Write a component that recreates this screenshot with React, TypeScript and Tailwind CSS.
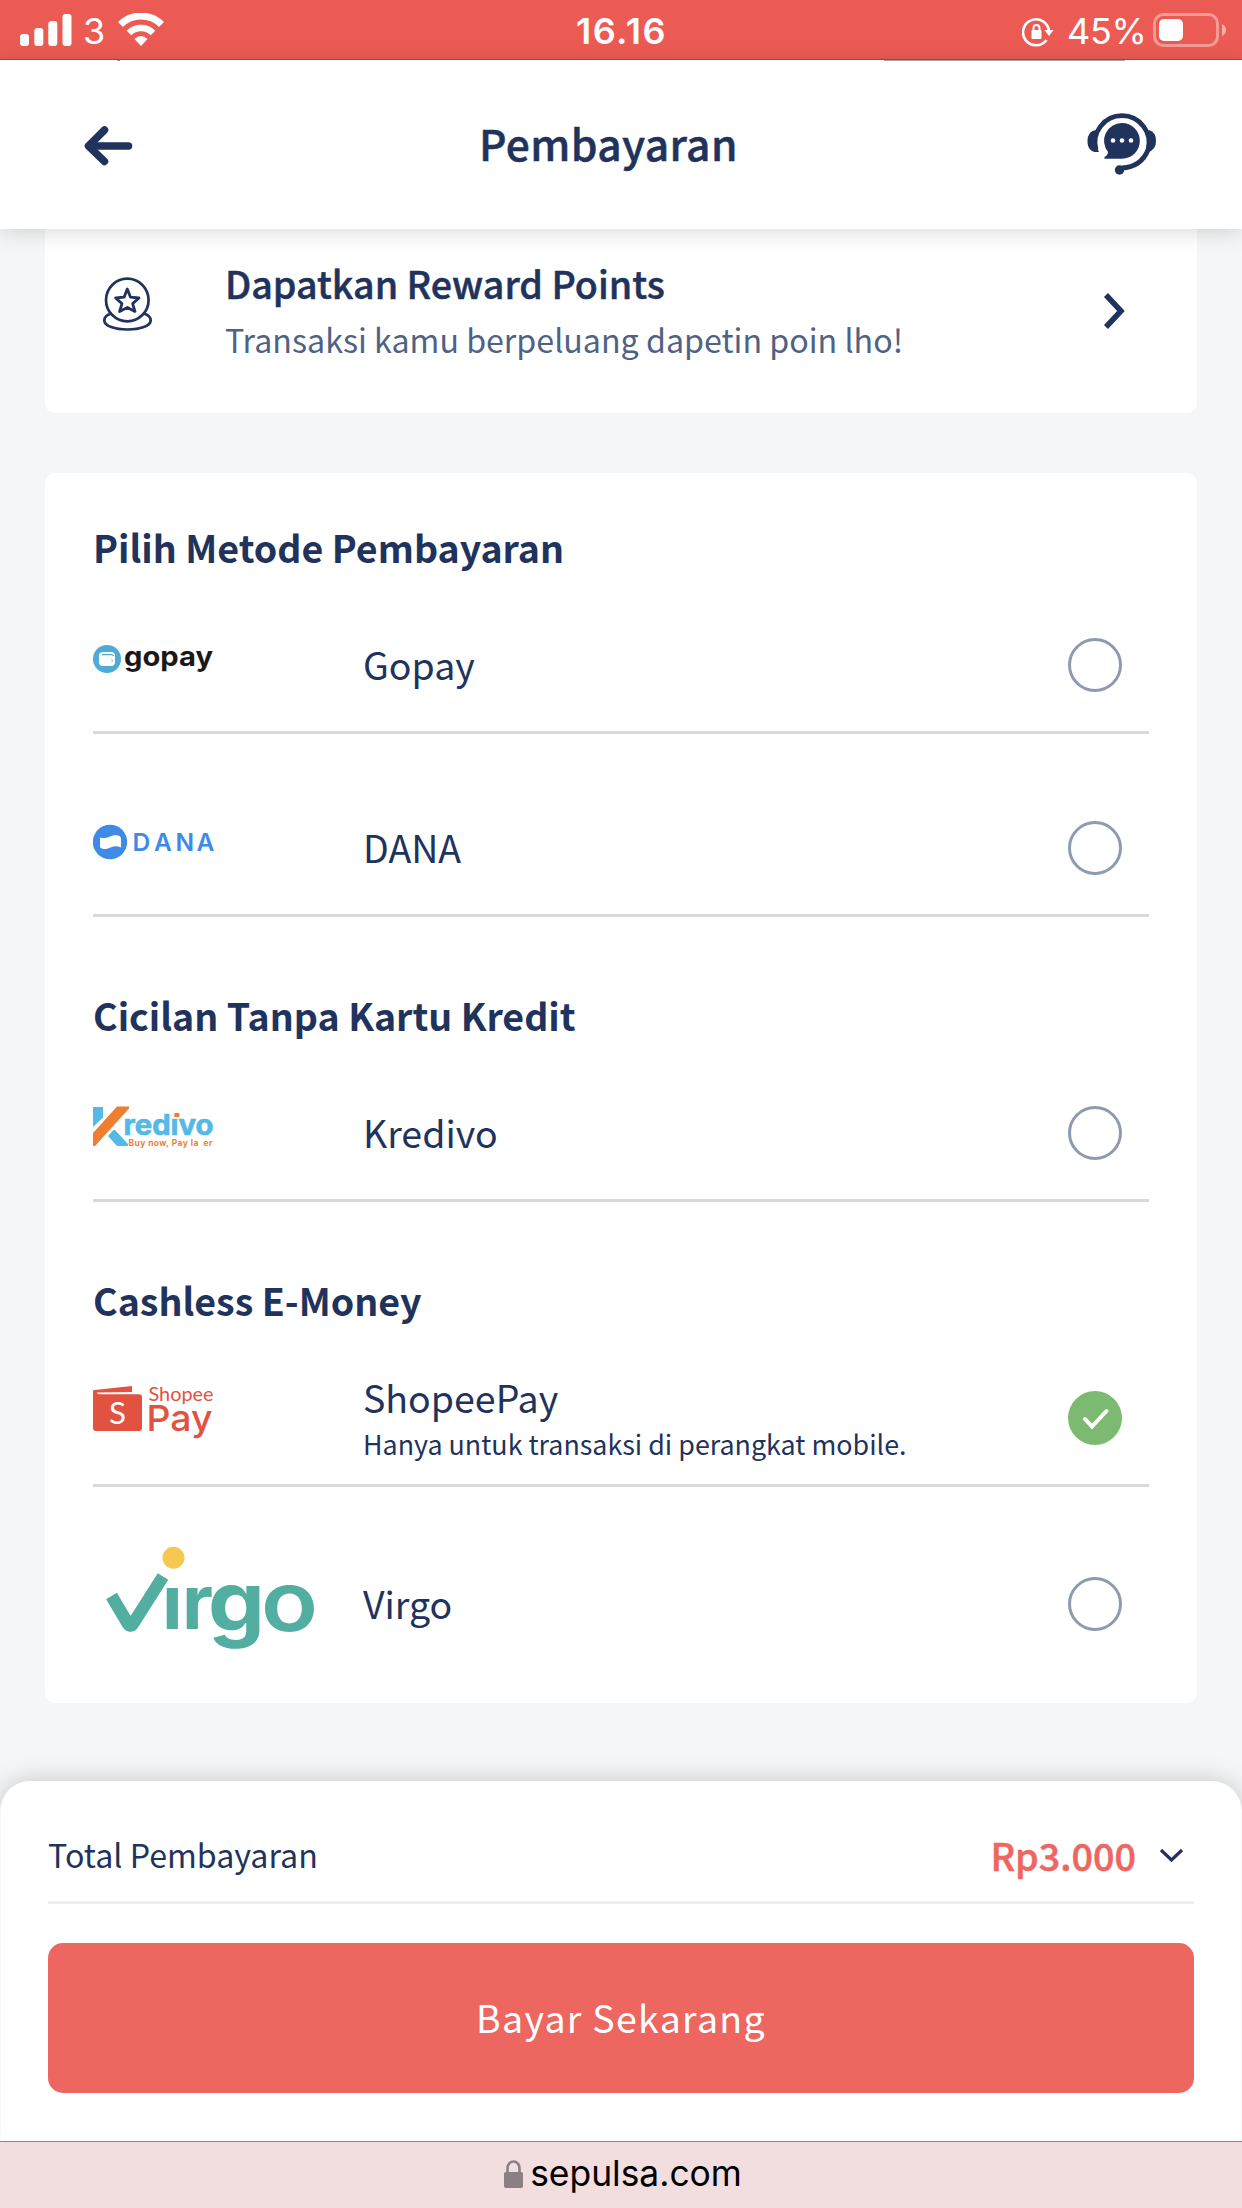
import React from "react";

const ui = "font-['Noto_Sans_CJK_JP','Noto_Sans',sans-serif]";
const sys = "font-['Inter','Liberation_Sans',sans-serif]";

function StatusBar() {
  return (
    <div className={`flex h-[60px] shrink-0 items-start border-b border-[#a04e50] bg-[#ec5b53] text-white ${sys}`}>
      <div className="flex w-[414px] items-start pl-5">
        <svg className="mt-[14px] h-8 w-[52px]" viewBox="0 0 52 32" fill="#fff">
          <rect x="0" y="20" width="9" height="12" rx="3" />
          <rect x="14.3" y="14" width="9" height="18" rx="3" />
          <rect x="28.3" y="7" width="9" height="25" rx="3" />
          <rect x="42.5" y="0" width="9" height="32" rx="3" />
        </svg>
        <span className="ml-[11px] mt-[7px] w-[22px] text-[36px] leading-[48px]">3</span>
        <svg className="ml-[13px] mt-[13px] h-[33px] w-[46px]" viewBox="0 0 46 33" fill="none" stroke="#fff">
          <path d="M2.5 11.5 A29 29 0 0 1 43.5 11.5" strokeWidth="7" />
          <path d="M11 20 A17 17 0 0 1 35 20" strokeWidth="6.5" />
          <path d="M23 33 L16.5 26 Q23 20 29.500 26Z" fill="#fff" stroke="none" />
        </svg>
      </div>
      <div className="mt-[7px] w-[414px] pl-px text-center text-[36px] font-semibold leading-[48px] tracking-[1.5px]">16.16</div>
      <div className="flex w-[414px] items-start justify-end pr-[15px]">
        <svg className="mt-[16px] h-[31px] w-8" viewBox="0 0 32 31" fill="none">
          <path d="M26.5 15 A13 13 0 1 0 24 23.500" stroke="#fff" strokeWidth="2.600" transform="translate(0.500 0.500)" />
          <path d="M22.500 14 H31.500 L27 20Z" fill="#fff" />
          <rect x="9.500" y="14" width="10" height="9" rx="1" fill="#fff" />
          <path d="M11.500 14 V12 A3 3 0 0 1 17.500 12 V14" stroke="#fff" strokeWidth="2" />
        </svg>
        <span className="ml-[13px] mt-[7px] w-[78px] whitespace-nowrap text-[36px] leading-[48px] tracking-[-0.3px]">45%</span>
        <svg className="ml-[8px] mt-[13px] h-[34px] w-[74px]" viewBox="0 0 74 34">
          <rect x="1.500" y="1.500" width="63" height="31" rx="9" fill="none" stroke="#fff" strokeOpacity=".4" strokeWidth="3" />
          <rect x="6" y="6" width="24" height="22" rx="5" fill="#fff" />
          <path d="M69 11 Q73 13 73 17 T69 23Z" fill="#fff" fillOpacity=".5" />
        </svg>
      </div>
    </div>
  );
}

function Header() {
  return (
    <header className="z-10 h-[169px] shrink-0 bg-white shadow-[0_2px_22px_rgba(0,0,0,0.16)]">
      <div className="flex h-px">
        <div className="ml-[117px] w-[3px] bg-[#8d94a0]" />
        <div className="ml-[764px] w-[241px] bg-[#a3a5a9]" />
      </div>
      <div className="flex items-start">
        <svg className="ml-[83px] mt-[64px] h-[42px] w-[50px]" viewBox="83 125 50 42" fill="none" stroke="#1f335c" strokeWidth="7.500" strokeLinecap="round" strokeLinejoin="round">
          <path d="M104.500 130 L88.500 146 L104.500 161.500" />
          <path d="M89 146 H128.500" />
        </svg>
        <h1 className="ml-[346px] mt-[50px] w-[264px] whitespace-nowrap text-[42.500px] font-medium leading-[64px] tracking-[0.4px] text-[#1f335c] [-webkit-text-stroke:0.5px_#1f335c]">Pembayaran</h1>
        <svg className="ml-[344px] mt-[50px] h-[66px] w-[70px]" viewBox="1087 112 70 66">
          <path d="M1096 151 A27 27 0 1 1 1148 151 Q1141 168 1122 169" fill="none" stroke="#1f335c" strokeWidth="4.800" />
          <path d="M1099 153 Q1087.500 154 1087.500 142 Q1087.500 132 1096 131 Q1093 142 1099 153Z" fill="#1f335c" />
          <path d="M1149 131 Q1156 133 1156 142 Q1156 151 1148 153Z" fill="#1f335c" />
          <circle cx="1119.500" cy="171" r="4.700" fill="#1f335c" />
          <path d="M1122 124 A17.800 17.800 0 0 1 1122 159.700 H1104.500 V158 Q1108 156 1108 153 A17.800 17.800 0 0 1 1122 124Z" fill="#1f335c" />
          <circle cx="1113" cy="141.500" r="2.300" fill="#fff" />
          <circle cx="1122" cy="141.500" r="2.300" fill="#fff" />
          <circle cx="1131" cy="141.500" r="2.300" fill="#fff" />
        </svg>
      </div>
    </header>
  );
}

function RewardCard() {
  return (
    <section className="mx-[45px] flex h-[184px] shrink-0 items-start rounded-b-[10px] bg-white">
      <svg className="ml-[57px] mt-[48px] h-[56px] w-[52px]" viewBox="102 277 52 56" fill="none" stroke="#1f335c" strokeWidth="2.700" strokeLinejoin="round">
        <circle cx="127.300" cy="300" r="21.300" />
        <path d="M127.300 289 L130.500 297.200 L139 298 L132.600 303.600 L135 311.500 L127.300 307.500 L119.600 311.500 L122 303.600 L115.600 298 L124.100 297.200Z" strokeWidth="2.800" />
        <path d="M111.500 313.500 C106 315 104.300 317.500 104.300 320.500 C104.300 326 115 329.500 127.500 329.500 C140 329.500 150.700 326 150.700 320.500 C150.700 317.500 149 315 143.500 313.500" />
      </svg>
      <div className="ml-[71px] mt-[30px] w-[760px] whitespace-nowrap">
        <div className="text-[37.600px] font-medium leading-[48px] text-[#1f335c] [-webkit-text-stroke:0.5px_#1f335c]">Dapatkan Reward Points</div>
        <div className="mt-[10px] text-[32.200px] leading-[44px] text-[#4f6285]">Transaksi kamu berpeluang dapetin poin lho!</div>
      </div>
      <svg className="ml-[115px] mt-[62px] h-10 w-7" viewBox="0 0 28 40" fill="none" stroke="#1f335c" strokeWidth="5.500">
        <path d="M6 4 L21 20 L6 36" />
      </svg>
    </section>
  );
}

function GopayLogo() {
  return (
    <svg className="mt-[3px] h-10 w-[130px] overflow-visible" viewBox="93 641 130 40">
      <circle cx="107" cy="659" r="14" fill="#4dabd5" />
      <rect x="99" y="652" width="16" height="14" rx="4" fill="#fff" />
      <path d="M102 654.700 H111 Q113 654.700 113.500 656" fill="none" stroke="#4dabd5" strokeWidth="1.200" />
      <path d="M111.500 659.500 A1.300 1.300 0 0 1 111.500 662" fill="none" stroke="#4dabd5" strokeWidth=".8" />
      <text x="124" y="666" textLength="89" lengthAdjust="spacingAndGlyphs" fill="#1c1819" className="font-['Inter'] text-[27px] font-bold">gopay</text>
    </svg>
  );
}

function DanaLogo() {
  return (
    <svg className="mt-[3px] h-10 w-[130px]" viewBox="93 824 130 40">
      <circle cx="110" cy="842" r="17.200" fill="#3e8ae6" />
      <path d="M100 837.500 Q105 839 110 836.500 T118 835.500 Q121 836 121 839 V847.500 Q116 845 110.500 847.500 T102 848.500 Q100 848.500 100 846Z" fill="#fff" />
      <text x="132.500 154 175.500 196.500" y="851" fill="#3e8ae6" className="font-['Inter'] text-[24.500px] font-semibold">DANA</text>
    </svg>
  );
}

function KredivoLogo() {
  return (
    <svg className="h-11 w-[130px]" viewBox="93 1106 130 44">
      <path d="M93 1107 H103 V1117.500 L93 1127Z" fill="#54b9e6" />
      <path d="M117 1106.500 H129 V1108.500 L95 1146 H93 V1133Z" fill="#f07e30" />
      <path d="M108 1136 L113.500 1130 H115 L128 1144 V1146 H117Z" fill="#54b9e6" />
      <text x="123.500" y="1134.500" textLength="90" lengthAdjust="spacingAndGlyphs" fill="#54b9e6" stroke="#54b9e6" strokeWidth=".7" className="font-['Inter'] text-[28px] font-bold">redivo</text>
      <rect x="172" y="1110" width="9" height="8" fill="#fff" />
      <rect x="174.300" y="1113" width="5" height="4" fill="#f07e30" />
      <text x="128.500" y="1146" textLength="84" fill="#f07e30" xmlSpace="preserve" className="whitespace-pre font-['Inter'] text-[8.500px] font-bold">Buy now, Pay la  er</text>
    </svg>
  );
}

function ShopeeLogo() {
  return (
    <svg className="mt-[-9px] h-[60px] w-[130px] overflow-visible" viewBox="93 1382 130 60">
      <path d="M93 1391 Q93 1390 95 1390 L132 1386 V1392 L97 1392.400 Q97 1394.200 99 1394.200 H139 Q142 1394.200 142 1397 V1428 Q142 1431 139 1431 H96 Q93 1431 93 1428Z" fill="#e25241" />
      <text x="109" y="1423.500" textLength="17" lengthAdjust="spacingAndGlyphs" fill="#fff" className="font-['Lato'] text-[31px]">S</text>
      <text x="148.500" y="1401" textLength="65" lengthAdjust="spacingAndGlyphs" fill="#e25241" className="font-['Lato'] text-[20px]">Shopee</text>
      <text x="146.500" y="1430.800" textLength="66" lengthAdjust="spacingAndGlyphs" fill="#e25241" className="font-['Inter'] text-[36px] font-medium">Pay</text>
    </svg>
  );
}

function VirgoLogo() {
  return (
    <svg className="mt-[-37px] h-[120px] w-[230px] overflow-visible" viewBox="93 1540 230 120">
      <circle cx="173.500" cy="1557.700" r="11" fill="#f7c851" />
      <path d="M111.500 1596 L127.500 1623 Q130.500 1628 133.500 1623 L163 1576.500" fill="none" stroke="#53aea2" strokeWidth="12.500" />
      <g fill="#53aea2" className="font-['Inter'] text-[76px] font-bold">
        <text x="162" y="1629">ı</text>
        <text x="182" y="1629">r</text>
        <text x="208" y="1631" textLength="57" lengthAdjust="spacingAndGlyphs" className="text-[83px] font-bold">g</text>
        <text x="261" y="1631" textLength="57" lengthAdjust="spacingAndGlyphs" className="text-[83px] font-semibold">o</text>
      </g>
    </svg>
  );
}

function Radio({ checked }: { checked?: boolean }) {
  if (checked) {
    return (
      <div className="h-[54px] w-[54px] rounded-full bg-[#7cba71]">
        <svg viewBox="0 0 54 54" fill="none" stroke="#fff" strokeWidth="4" strokeLinecap="round">
          <path d="M17 28 L24 35.500 L38.500 20" />
        </svg>
      </div>
    );
  }
  return <div className="h-[54px] w-[54px] rounded-full border-[3px] border-[#8e9ab0]" />;
}

function Method({ logo, name, note, checked, className }: { logo: React.ReactNode; name: string; note?: string; checked?: boolean; className: string }) {
  return (
    <div className={`flex items-start text-[#1f335c] ${className}`}>
      <div className="w-[270px] shrink-0">{logo}</div>
      <div className={note ? "mt-[-18px] grow" : "mt-[2px] grow"}>
        <div className="text-[37.500px] leading-[48px]">{name}</div>
        {note && <div className="mt-[3px] whitespace-nowrap text-[26.850px] leading-10">{note}</div>}
      </div>
      <div className="mr-[27px] shrink-0">
        <Radio checked={checked} />
      </div>
    </div>
  );
}

function Heading({ children, className }: { children: React.ReactNode; className: string }) {
  return <h2 className={`text-[37.550px] font-bold leading-[48px] text-[#1f335c] ${className}`}>{children}</h2>;
}

const line = "border-b-[3px] border-[#d9d9d9]";

export default function App() {
  return (
    <div className={`flex h-[2208px] w-[1242px] flex-col overflow-hidden bg-[#f5f6f8] ${ui}`}>
      <StatusBar />
      <Header />
      <RewardCard />
      <section className="mx-[45px] mt-[60px] h-[1230px] shrink-0 rounded-[10px] bg-white px-12 pt-[50px]">
        <Heading className="">Pilih Metode Pembayaran</Heading>
        <Method className={`h-[163px] pt-[67px] ${line}`} logo={<GopayLogo />} name="Gopay" />
        <Method className={`h-[183px] pt-[87px] ${line}`} logo={<DanaLogo />} name="DANA" />
        <Heading className="mt-[74px]">Cicilan Tanpa Kartu Kredit</Heading>
        <Method className={`h-[163px] pt-[67px] ${line}`} logo={<KredivoLogo />} name="Kredivo" />
        <Heading className="mt-[74px]">Cashless E-Money</Heading>
        <Method className={`h-[163px] pt-[67px] ${line}`} logo={<ShopeeLogo />} name="ShopeePay" note="Hanya untuk transaksi di perangkat mobile." checked />
        <Method className="pt-[90px]" logo={<VirgoLogo />} name="Virgo" />
      </section>
      <section className="mt-[78px] h-[360px] shrink-0 rounded-t-[30px] border-x border-[#f8f8f9] bg-white px-[47px] pt-[50px] shadow-[0_0_26px_rgba(0,0,0,0.2)]">
        <div className="flex h-[73px] items-start border-b-[3px] border-[#eeeeee]">
          <div className="mt-[-1px] grow text-[32.200px] leading-[48px] text-[#1f335c]">Total Pembayaran</div>
          <div className="text-[37.700px] font-medium leading-[48px] text-[#ed6660] [-webkit-text-stroke:0.5px_#ed6660]">Rp3.000</div>
          <svg className="ml-[22px] mr-[9px] mt-[14px] h-5 w-[27px]" viewBox="0 0 27 20" fill="none" stroke="#1f335c" strokeWidth="3.200">
            <path d="M3 5 L13.500 15 L24 5" />
          </svg>
        </div>
        <button className="mt-[39px] flex h-[150px] w-full items-center justify-center rounded-[15px] bg-[#ed6660] pb-[2px] text-[37.500px] tracking-[1.300px] text-white">Bayar Sekarang</button>
      </section>
      <footer className={`flex h-[67px] shrink-0 items-start justify-center border-t border-[#8e8788] bg-[#f2dede] text-black ${sys}`}>
        <svg className="ml-1 mt-[18px] h-7 w-5" viewBox="0 0 20 28">
          <rect x="0" y="12" width="19" height="16" rx="2" fill="#8b7f84" />
          <path d="M3.500 13 V8 A6 6.500 0 0 1 15.500 8 V13" fill="none" stroke="#8b7f84" strokeWidth="2.600" />
        </svg>
        <span className="ml-[6px] mt-[8px] text-[35.400px] leading-[48px]">sepulsa.com</span>
      </footer>
    </div>
  );
}
